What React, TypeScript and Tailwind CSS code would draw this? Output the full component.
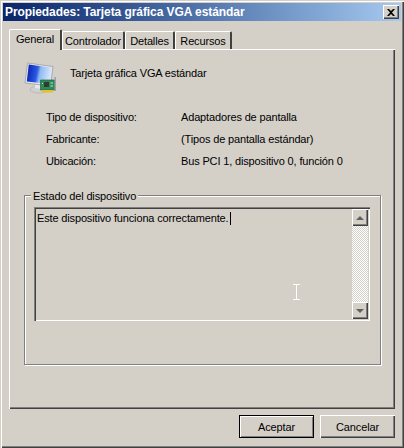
const win = 'font-["Liberation_Sans",sans-serif] text-[11px] leading-[13px] tracking-[-0.15px] text-black'

function DeviceIcon() {
  return (
    <svg width="32" height="32" viewBox="0 0 32 32" className="shrink-0">
      <defs>
        <linearGradient id="scr" x1="0" y1="0" x2="1" y2="0.15">
          <stop offset="0" stopColor="#0818a8" />
          <stop offset="0.45" stopColor="#2a5ae0" />
          <stop offset="0.58" stopColor="#8fb8f2" />
          <stop offset="1" stopColor="#d6e6fa" />
        </linearGradient>
      </defs>
      <ellipse cx="15" cy="27.500" rx="9" ry="3.500" fill="#cfcfcf" stroke="#a2a2a2" strokeWidth="0.5" />
      <path d="M11 22l8 1v4l-8-1z" fill="#e8e8e8" />
      <path d="M1 21L3.500 1 29 4.500 26.500 24z" fill="#e2e5ea" stroke="#8e96a3" strokeWidth="0.7" />
      <path d="M2.800 19.500L4.800 2.500 27.800 5.800 25.500 22z" fill="url(#scr)" />
      <path d="M16.500 18h14v10h-14z" fill="#2f8a58" stroke="#1f5f3d" strokeWidth="0.7" />
      <path d="M20 20h5v5h-5z" fill="#2d3b33" />
      <path d="M18 21h1v1h-1zM26.500 20.500h2.500v1h-2.500zM26.500 23.500h2.500v1h-2.500z" fill="#b7e3c6" />
      <path d="M18 28h11v2.500H18z" fill="#e6c02e" />
      <path d="M30.500 15h1.500v14h-1.500z" fill="#9aa0a6" />
    </svg>
  )
}

function Tab({ label, active, w }: { label: string; active?: boolean; w: string }) {
  return (
    <div
      className={`${w} flex items-center justify-center rounded-t-[2px] border-l border-t border-r-2 border-l-white border-t-white border-r-[#404040] bg-[#d4d0c8] ${
        active ? 'relative z-10 -mb-px h-[21px] pb-px' : 'h-[18px] pt-px'
      }`}
    >
      {label}
    </div>
  )
}

function InfoRow({ label, value }: { label: string; value: string }) {
  return (
    <div className="flex h-[22px] items-center">
      <span className="w-[135px]">{label}</span>
      <span>{value}</span>
    </div>
  )
}

function ScrollButton({ up }: { up?: boolean }) {
  return (
    <div className="flex h-[17px] w-[16px] items-center justify-center bg-[#d4d0c8] shadow-[inset_1px_1px_0_#fff,inset_-1px_-1px_0_#404040,inset_-2px_-2px_0_#808080]">
      <div
        className={`h-0 w-0 border-x-[4px] border-x-transparent ${
          up ? 'border-b-[4px] border-b-[#606060]' : 'border-t-[4px] border-t-[#606060]'
        }`}
      />
    </div>
  )
}

function PushButton({ label, primary }: { label: string; primary?: boolean }) {
  return (
    <button
      className={`flex h-[23px] w-[75px] items-center justify-center bg-[#d4d0c8] pt-px ${
        primary
          ? 'border border-black shadow-[inset_1px_1px_0_#fff,inset_-1px_-1px_0_#808080]'
          : 'shadow-[inset_1px_1px_0_#fff,inset_-1px_-1px_0_#404040,inset_-2px_-2px_0_#808080]'
      }`}
    >
      {label}
    </button>
  )
}

export default function App() {
  return (
    <div
      className={`${win} flex h-[448px] w-[404px] flex-col overflow-hidden bg-[#d4d0c8] p-[3px] shadow-[inset_1px_1px_0_#d4d0c8,inset_2px_2px_0_#fff,inset_-1px_-1px_0_#404040,inset_-2px_-2px_0_#808080]`}
    >
      {/* Title bar */}
      <div className="flex h-[18px] shrink-0 items-center justify-between bg-gradient-to-r from-[#0a246a] to-[#a6caf0] pl-[2px] pr-[2px]">
        <span className="whitespace-nowrap text-[12px] font-bold tracking-[-0.08px] text-white">
          Propiedades: Tarjeta gráfica VGA estándar
        </span>
        <div className="flex h-[14px] w-[16px] items-center justify-center bg-[#d4d0c8] shadow-[inset_1px_1px_0_#fff,inset_-1px_-1px_0_#404040,inset_-2px_-2px_0_#808080]">
          <svg width="8" height="7" viewBox="0 0 8 7">
            <path d="M0 0h2l2 2 2-2h2L5 3.500 8 7H6L4 5 2 7H0l3-3.500z" fill="#000" />
          </svg>
        </div>
      </div>

      {/* Tabs */}
      <div className="ml-[6px] mt-[8px] flex h-[20px] shrink-0 items-end">
        <Tab label="General" active w="w-[53px]" />
        <Tab label="Controlador" w="w-[63px]" />
        <Tab label="Detalles" w="w-[50px]" />
        <Tab label="Recursos" w="w-[57px]" />
      </div>

      {/* Panel */}
      <div className="ml-[6px] flex h-[360px] w-[386px] shrink-0 flex-col border-l border-t border-l-white border-t-white pl-[14px] pt-[12px] shadow-[inset_-1px_-1px_0_#404040,inset_-2px_-2px_0_#808080]">
        <div className="flex h-[32px] items-center gap-[14px]">
          <DeviceIcon />
          <span className="-mt-[10px]">Tarjeta gráfica VGA estándar</span>
        </div>

        <div className="ml-[22px] mt-[12px]">
          <InfoRow label="Tipo de dispositivo:" value="Adaptadores de pantalla" />
          <InfoRow label="Fabricante:" value="(Tipos de pantalla estándar)" />
          <InfoRow label="Ubicación:" value="Bus PCI 1, dispositivo 0, función 0" />
        </div>

        {/* Group box */}
        <div className="relative mt-[23px] h-[170px] w-[357px] border border-[#808080] px-[9px] pt-[11px] shadow-[inset_1px_1px_0_#fff,1px_1px_0_#fff]">
          <span className="absolute -top-[6px] left-[6px] bg-[#d4d0c8] px-[2px]">Estado del dispositivo</span>

          {/* Read-only text box */}
          <div className="flex h-[114px] w-[336px] justify-between p-[2px] shadow-[inset_1px_1px_0_#808080,inset_2px_2px_0_#404040,inset_-1px_-1px_0_#fff]">
            <div className="flex h-[16px] items-center pl-[1px] pt-[3px]">
              Este dispositivo funciona correctamente.
              <span className="ml-px h-[13px] w-px bg-black" />
            </div>
            <div className="flex w-[16px] flex-col bg-[repeating-conic-gradient(#d4d0c8_0_25%,#fff_0_50%)] bg-[length:2px_2px]">
              <ScrollButton up />
              <div className="flex-1" />
              <ScrollButton />
            </div>
          </div>

          {/* Mouse pointer */}
          <svg width="7" height="16" viewBox="0 0 7 16" className="absolute left-[268px] top-[88px]">
            <path d="M0 .5h7M0 15.500h7M3.500 0v16" stroke="#fff" fill="none" />
          </svg>
        </div>
      </div>

      {/* Buttons */}
      <div className="mt-[6px] flex w-[392px] justify-end gap-[6px]">
        <PushButton label="Aceptar" primary />
        <PushButton label="Cancelar" />
      </div>
    </div>
  )
}
